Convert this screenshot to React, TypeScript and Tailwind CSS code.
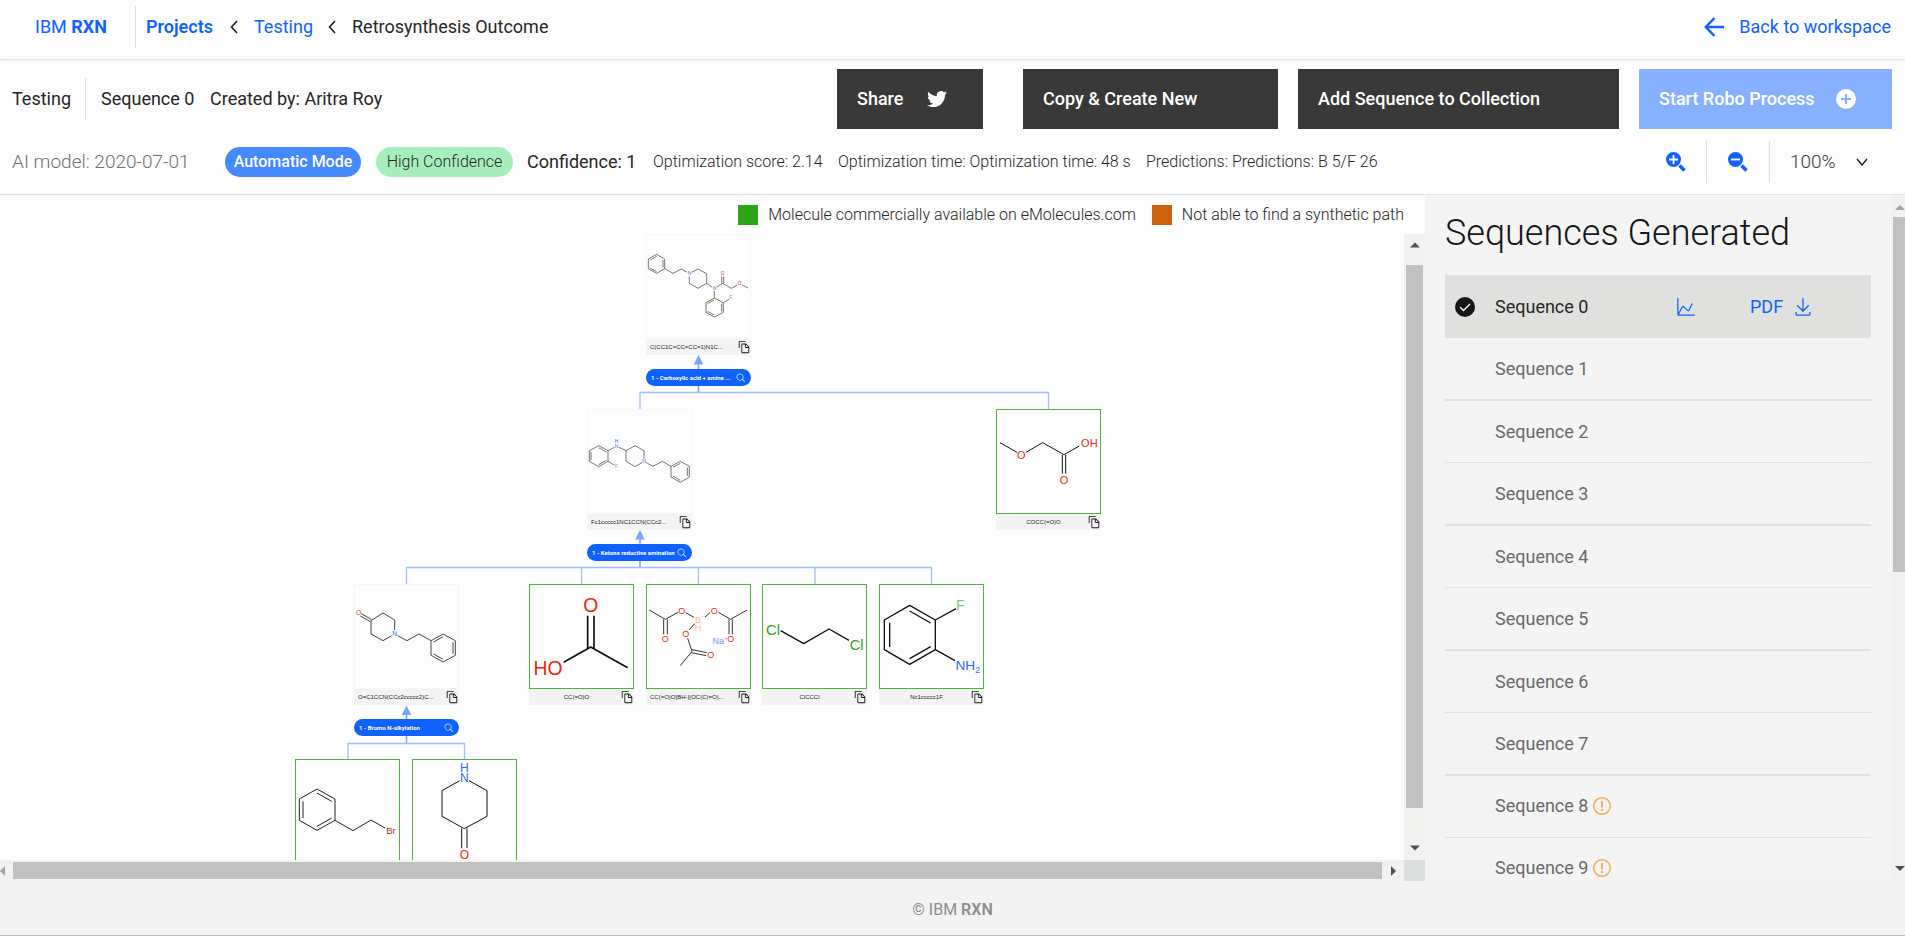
import { FaTwitter } from "react-icons/fa";

type Atom = { x: number; y: number; t: string; c: string; s: number };

type Molecule = {
  name: string;
  place: string;
  available: boolean;
  box: string;
  weight: number;
  tone: string;
  bonds: string;
  atoms: Atom[];
};

const RED = "#e8290b";
const BLUE = "#2f66f6";
const GREEN = "#2ca516";

const molecules: Molecule[] = [
  {
    name: "C(CC1C=CC=CC=1)N1C...",
    place: "left-[646px] top-0",
    available: false,
    box: "258 13 315 315",
    weight: 2,
    tone: "#333",
    bonds:
      "M265 88L290 74L314 88V117L290 131L265 117ZM271 91L290 80M309 91V114M290 126L271 115M314 117L339 131L364 118L381 128M395 128L414 118L440 132V161L414 176L388 161V140M440 161L456 172M470 172L488 161L514 176L532 166M546 166L564 175M485 161V140M491 161V140M463 184V205L490 219V248L463 262L438 248V219L463 205M462 211L443 222M485 222V245M463 256L443 245M490 219L507 209",
    atoms: [
      { x: 388, y: 132, t: "N", c: BLUE, s: 14 },
      { x: 463, y: 176, t: "N", c: BLUE, s: 14 },
      { x: 488, y: 132, t: "O", c: RED, s: 14 },
      { x: 539, y: 161, t: "O", c: RED, s: 14 },
      { x: 513, y: 204, t: "F", c: "#5fc44e", s: 14 },
    ],
  },
  {
    name: "Fc1ccccc1NC1CCN(CCc2...",
    place: "left-[587px] top-[175px]",
    available: false,
    box: "22 28 315 315",
    weight: 2,
    tone: "#333",
    bonds:
      "M29 153L57 138L85 153V185L57 201L29 185ZM34 156V182M57 144L80 157M57 195L80 182M85 153L104 143M118 143L139 153L166 138L193 153V177M187 189L166 201L139 185V153M200 189L220 200L248 185L274 200L302 185L329 200V232L302 248L274 232V200M280 203L302 191M323 203V229M302 242L280 229M85 185L104 196",
    atoms: [
      { x: 111, y: 125, t: "H", c: BLUE, s: 15 },
      { x: 111, y: 140, t: "N", c: BLUE, s: 15 },
      { x: 193, y: 186, t: "N", c: BLUE, s: 15 },
      { x: 110, y: 201, t: "F", c: "#5fc44e", s: 14 },
    ],
  },
  {
    name: "COCC(=O)O",
    place: "left-[996px] top-[175px]",
    available: true,
    box: "1248 28 315 315",
    weight: 3,
    tone: "#111",
    bonds:
      "M1260 129L1311 158M1338 158L1388 129L1452 165L1498 139M1447 166V222M1457 166V222",
    atoms: [
      { x: 1324, y: 166, t: "O", c: RED, s: 33 },
      { x: 1528, y: 130, t: "OH", c: RED, s: 33 },
      { x: 1452, y: 240, t: "O", c: RED, s: 33 },
    ],
  },
  {
    name: "O=C1CCN(CCc2ccccc2)C...",
    place: "left-[354px] top-[350px]",
    available: false,
    box: "223 73 315 315",
    weight: 3,
    tone: "#444",
    bonds:
      "M245 162L276 180M242 169L272 186M274 183L310 160L345 181V212M336 228L310 243L274 223V183M354 228L382 243L418 223L454 243L490 223L527 243V287L490 307L454 287V243M462 247L490 231M520 248V282M490 299L462 283",
    atoms: [
      { x: 237, y: 160, t: "O", c: "#d9480f", s: 20 },
      { x: 345, y: 223, t: "N", c: BLUE, s: 20 },
    ],
  },
  {
    name: "CC(=O)O",
    place: "left-[529px] top-[350px]",
    available: true,
    box: "747 73 315 315",
    weight: 5,
    tone: "#111",
    bonds: "M923 168V266M942 168V266M851 308L932 262L1043 324",
    atoms: [
      { x: 932, y: 137, t: "O", c: RED, s: 58 },
      { x: 804, y: 325, t: "HO", c: RED, s: 58 },
    ],
  },
  {
    name: "CC(=O)O[BH-](OC(C)=O)...",
    place: "left-[646px] top-[350px]",
    available: true,
    box: "78 73 315 315",
    weight: 3,
    tone: "#333",
    bonds:
      "M88 151L136 179L174 158M131 179V224M142 179V224M197 159L222 173M255 172L270 159M295 158L332 179L381 151M327 179V224M337 179V224M224 192L207 211M203 236L216 275L181 318M216 270L260 279M214 279L258 288",
    atoms: [
      { x: 136, y: 237, t: "O", c: RED, s: 27 },
      { x: 185, y: 152, t: "O", c: RED, s: 27 },
      { x: 283, y: 152, t: "O", c: RED, s: 27 },
      { x: 332, y: 237, t: "O", c: RED, s: 27 },
      { x: 197, y: 223, t: "O", c: RED, s: 27 },
      { x: 272, y: 286, t: "O", c: RED, s: 27 },
      { x: 234, y: 180, t: "B", c: "#ffb59e", s: 27 },
      { x: 234, y: 204, t: "H", c: "#ffb59e", s: 27 },
      { x: 249, y: 170, t: "−", c: "#ffb59e", s: 18 },
      { x: 295, y: 244, t: "Na", c: "#8093ff", s: 27 },
      { x: 317, y: 236, t: "+", c: "#8093ff", s: 16 },
    ],
  },
  {
    name: "ClCCCl",
    place: "left-[762px] top-[350px]",
    available: true,
    box: "427 73 315 315",
    weight: 4,
    tone: "#111",
    bonds: "M483 213L552 252L628 208L688 242",
    atoms: [
      { x: 460, y: 210, t: "Cl", c: GREEN, s: 44 },
      { x: 711, y: 254, t: "Cl", c: GREEN, s: 44 },
    ],
  },
  {
    name: "Nc1ccccc1F",
    place: "left-[879px] top-[350px]",
    available: true,
    box: "777 73 315 315",
    weight: 4,
    tone: "#111",
    bonds:
      "M793 181L869 137L946 181V270L869 314L793 270ZM809 189V262M869 154L932 190M869 297L932 261M946 181L1008 147M946 270L1005 303",
    atoms: [
      { x: 1021, y: 137, t: "F", c: "#7fcf78", s: 43 },
      { x: 1036, y: 315, t: "NH", c: BLUE, s: 41 },
      { x: 1073, y: 330, t: "2", c: BLUE, s: 26 },
    ],
  },
  {
    name: "BrCCc1ccccc1",
    place: "left-[295px] top-[525px]",
    available: true,
    box: "46 600 315 315",
    weight: 3,
    tone: "#222",
    bonds:
      "M59 720L112 690L166 720V784L112 814L59 784ZM70 727V777M112 702L156 727M112 802L156 777M166 784L220 815L274 783L316 807",
    atoms: [{ x: 334, y: 814, t: "Br", c: "#a5371f", s: 29 }],
  },
  {
    name: "O=C1CCNCC1",
    place: "left-[412px] top-[525px]",
    available: true,
    box: "397 600 315 315",
    weight: 3,
    tone: "#111",
    bonds:
      "M540 665L487 695V772L554 809L622 772V695L568 665M546 808V867M562 808V867",
    atoms: [
      { x: 554, y: 626, t: "H", c: BLUE, s: 36 },
      { x: 554, y: 657, t: "N", c: BLUE, s: 36 },
      { x: 554, y: 887, t: "O", c: RED, s: 36 },
    ],
  },
];

const reactions = [
  { label: "1 - Carboxylic acid + amine ...", place: "left-[646px] top-[135px]" },
  { label: "1 - Ketone reductive amination", place: "left-[587px] top-[310px]" },
  { label: "1 - Bromo N-alkylation", place: "left-[354px] top-[485px]" },
];

const sequences = Array.from({ length: 10 }, (_, i) => ({
  name: `Sequence ${i}`,
  warning: i > 7,
}));

function Icon({ d, className }: { d: string; className: string }) {
  return (
    <svg viewBox="0 0 32 32" fill="currentColor" className={className} aria-hidden="true">
      <path d={d} />
    </svg>
  );
}

const SEARCH =
  "M29 27.586l-7.552-7.552a11.018 11.018 0 1 0-1.414 1.414L27.586 29ZM4 13a9 9 0 1 1 9 9 9.01 9.01 0 0 1-9-9Z";
const DOWNLOAD =
  "M26 24v4H6v-4H4v4a2 2 0 0 0 2 2h20a2 2 0 0 0 2-2v-4zM26 14l-1.41-1.41L17 20.17V2h-2v18.17l-7.59-7.58L6 14l10 10 10-10z";
const CHART =
  "M4.67 28l6.39-12 7.3 6.49a2 2 0 0 0 1.7.47 2 2 0 0 0 1.42-1.07L27 10.9l-1.82-.9-5.49 11-7.3-6.49a2 2 0 0 0-1.68-.51 2 2 0 0 0-1.42 1L4 25V2H2v26a2 2 0 0 0 2 2h26v-2z";
const COPY =
  "M27.4 14.7l-6.1-6.1C21 8.2 20.5 8 20 8h-8c-1.1 0-2 .9-2 2v18c0 1.1.9 2 2 2h14c1.1 0 2-.9 2-2V16.1c0-.5-.2-1-.6-1.4zM20 10l5.9 6H20v-6zm-8 18V10h6v6c0 1.1.9 2 2 2h6v10H12zM6 18H4V4c0-1.1.9-2 2-2h14v2H6v14z";

function ChevronLeft() {
  return (
    <svg viewBox="0 0 8 14" className="h-[14px] w-2" fill="none" stroke="#161616" strokeWidth="1.5" aria-hidden="true">
      <path d="M7 1L1.5 7L7 13" />
    </svg>
  );
}

function Divider() {
  return <span className="h-[42px] w-px shrink-0 bg-[#dcdcdc]" />;
}

function ZoomIcon({ plus }: { plus?: boolean }) {
  return (
    <svg viewBox="0 0 20 20" className="size-5" aria-hidden="true">
      <circle cx="7.5" cy="7.5" r="7.5" fill="#0f62fe" />
      <path d="M13.500 13.500L18.500 18.500" stroke="#0f62fe" strokeWidth="3.6" />
      <path d={plus ? "M3 7.5H12M7.5 3V12" : "M3 7.5H12"} stroke="#fff" strokeWidth="1.8" />
    </svg>
  );
}

function MoleculeCard({ m }: { m: Molecule }) {
  const long = m.name.length > 14;
  return (
    <figure className={`absolute w-[105px] ${m.place}`}>
      <div
        className={
          m.available
            ? "size-[105px] border border-[#4db53c] bg-[#fdfdfd]"
            : "size-[105px] border border-[#f6f6f6] bg-[#fdfdfd]"
        }
      >
        <svg
          viewBox={m.box}
          className="-m-px size-[105px] font-['Liberation_Sans',sans-serif] font-normal"
          role="img"
          aria-label={m.name}
        >
          <path d={m.bonds} fill="none" stroke={m.tone} strokeWidth={m.weight} strokeLinejoin="round" />
          {m.atoms.map((a) => (
            <text
              key={`${a.x}-${a.y}`}
              x={a.x}
              y={a.y}
              dy="0.36em"
              textAnchor="middle"
              fill={a.c}
              fontSize={a.s}
            >
              {a.t}
            </text>
          ))}
        </svg>
      </div>
      <figcaption className="flex h-4 items-center bg-[#f3f3f3] pl-1 font-['Liberation_Sans',sans-serif] text-[6px] leading-4 font-normal text-[#222]">
        <span className={long ? "whitespace-nowrap" : "w-24 text-center"}>{m.name}</span>
        <button type="button" aria-label="Copy SMILES" className="ml-auto shrink-0">
          <Icon d={COPY} className="size-[14px] text-[#161616]" />
        </button>
      </figcaption>
    </figure>
  );
}

function ReactionPill({ label, place }: { label: string; place: string }) {
  return (
    <button
      type="button"
      className={`absolute flex h-[17px] w-[105px] items-center rounded-full bg-[#0f62fe] pr-[5px] pl-[5px] text-[6px] leading-[17px] font-bold text-white ${place}`}
    >
      <span className="whitespace-nowrap">{label}</span>
      <Icon d={SEARCH} className="ml-auto size-[10px] shrink-0" />
    </button>
  );
}

function Connectors() {
  return (
    <svg className="absolute top-0 left-0 h-[626px] w-[1100px]" viewBox="0 0 1100 626" aria-hidden="true">
      <g fill="none" stroke="#9dc0fd" strokeWidth="1.3">
        <path d="M640 176V158.5H1048.5V176" />
        <path d="M406.5 350V333.5H931.5V350M581.5 333.5V350M698.5 333.5V350M815 333.5V350" />
        <path d="M348 526V509.5H464.5V526" />
      </g>
      <g fill="none" stroke="#78a5fa" strokeWidth="1.5">
        <path d="M698.5 125V158M640 300V333M406.5 476V509" />
      </g>
      <path
        d="M698.5 121l4.8 9.5h-9.6zM640 296l4.8 9.5h-9.6zM406.5 471.500l4.800 9.500h-9.600z"
        fill="#78a5fa"
      />
    </svg>
  );
}

function Arrow({ d, className }: { d: string; className: string }) {
  return (
    <svg viewBox="0 0 10 10" className={`size-[10px] ${className}`} fill="currentColor" aria-hidden="true">
      <path d={d} />
    </svg>
  );
}

export default function App() {
  return (
    <div className="flex h-screen flex-col overflow-hidden border-b border-[#c1c1c1] bg-[#fdfdfd] font-[Roboto,'Open_Sans',sans-serif] text-[18px] leading-6 font-normal text-[#262626]">
      <header className="flex h-[60px] shrink-0 items-center border-b border-[#e6e6e6] pr-3.5 pb-[5px] pl-[35px] shadow-xs">
        <a href="#home" className="w-[100px] text-[#0f62fe]">
          IBM <b className="font-bold">RXN</b>
        </a>
        <Divider />
        <nav aria-label="Breadcrumb" className="flex items-center pl-2.5">
          <a href="#projects" className="w-[84px] font-semibold text-[#0f62fe]">
            Projects
          </a>
          <ChevronLeft />
          <a href="#testing" className="ml-4 w-[74px] text-[#0f62fe]">
            Testing
          </a>
          <ChevronLeft />
          <span className="ml-4">Retrosynthesis Outcome</span>
        </nav>
        <a href="#workspace" className="ml-auto flex items-center gap-[15px] text-[#0f62fe]">
          <svg viewBox="0 0 20 20" className="size-5" fill="none" stroke="currentColor" strokeWidth="2.5" aria-hidden="true">
            <path d="M10.500 1L1.800 10L10.500 19M2 10H20" />
          </svg>
          Back to workspace
        </a>
      </header>

      <section className="shrink-0 border-b border-[#e6e6e6] shadow-xs">
        <div className="flex h-[69px] items-end pr-[13px] pl-3">
          <div className="flex h-[60px] items-center">
            <span className="w-[73px]">Testing</span>
            <Divider />
            <span className="ml-[15px] w-[109px]">Sequence 0</span>
            <span>Created by: Aritra Roy</span>
          </div>
          <div className="ml-auto flex gap-5 font-medium text-white">
            <button type="button" className="mr-5 flex h-[60px] w-[146px] items-center justify-between bg-[#393939] pr-9 pl-5">
              Share
              <FaTwitter className="size-5" aria-hidden="true" />
            </button>
            <button type="button" className="h-[60px] w-[255px] bg-[#393939] pl-5 text-left">
              Copy &amp; Create New
            </button>
            <button type="button" className="h-[60px] w-[321px] bg-[#393939] pl-5 text-left">
              Add Sequence to Collection
            </button>
            <button type="button" className="flex h-[60px] w-[253px] items-center justify-between bg-[#87b1ff] pr-9 pl-5">
              Start Robo Process
              <svg viewBox="0 0 20 20" className="size-5" aria-hidden="true">
                <circle cx="10" cy="10" r="10" fill="#fff" />
                <path d="M5 10H15M10 5V15" stroke="#87b1ff" strokeWidth="2.200" />
              </svg>
            </button>
          </div>
        </div>

        <div className="flex h-[65px] items-center pr-[13px] pl-3 text-[16px] font-light">
          <span className="w-[213px] text-[19px] text-[#6f6f6f]">AI model: 2020-07-01</span>
          <span className="flex h-[30px] w-[136px] items-center justify-center rounded-full bg-[#4589ff] font-medium text-white">
            Automatic Mode
          </span>
          <span className="ml-[15px] flex h-[30px] w-[137px] items-center justify-center rounded-full bg-[#a7efba]">
            High Confidence
          </span>
          <span className="ml-3.5 w-[126px] text-[18px] font-normal">Confidence: 1</span>
          <span className="w-[185px]">Optimization score: 2.14</span>
          <span className="w-[308px]">Optimization time: Optimization time: 48 s</span>
          <span>Predictions: Predictions: B 5/F 26</span>
          <div className="ml-auto flex items-center">
            <button type="button" aria-label="Zoom in" className="mr-5">
              <ZoomIcon plus />
            </button>
            <Divider />
            <button type="button" aria-label="Zoom out" className="mx-[21px]">
              <ZoomIcon />
            </button>
            <Divider />
            <div className="relative ml-5 flex items-center pr-3">
              <select
                aria-label="Zoom level"
                defaultValue="100%"
                className="w-[90px] appearance-none bg-transparent text-[19px] font-light text-[#393939]"
              >
                <option>100%</option>
                <option>75%</option>
                <option>50%</option>
              </select>
              <svg
                viewBox="0 0 12 8"
                className="pointer-events-none absolute right-6 h-2 w-3"
                fill="none"
                stroke="#161616"
                strokeWidth="1.300"
                aria-hidden="true"
              >
                <path d="M1 1L6 7L11 1" />
              </svg>
            </div>
          </div>
        </div>
      </section>

      <main className="flex min-h-0 flex-1">
        <section className="flex min-w-0 flex-1 flex-col">
          <div className="flex h-[39px] shrink-0 items-center justify-end pr-[21px] text-[16px] font-light">
            <span className="mr-2.5 size-5 bg-[#2ca516]" />
            <span className="mr-4">Molecule commercially available on eMolecules.com</span>
            <span className="mr-2.5 size-5 bg-[#cc610f]" />
            <span>Not able to find a synthetic path</span>
          </div>
          <div className="flex min-h-0 flex-1">
            <div className="relative min-w-0 flex-1 overflow-hidden">
              <Connectors />
              {molecules.map((m) => (
                <MoleculeCard key={m.name} m={m} />
              ))}
              {reactions.map((r) => (
                <ReactionPill key={r.label} label={r.label} place={r.place} />
              ))}
            </div>
            <div className="flex w-[21px] shrink-0 flex-col items-center bg-[#f1f1ef] pt-[6px] pb-[7px] text-[#505050]">
              <Arrow d="M0 7.500H10L5 2.500Z" className="mb-[15px]" />
              <span className="w-[17px] flex-1 bg-[#c1c1c1]" />
              <Arrow d="M0 2.500H10L5 7.500Z" className="mt-[35px]" />
            </div>
          </div>
          <div className="flex h-[21px] shrink-0 items-center bg-[#f1f1ef] text-[#505050]">
            <Arrow d="M5 0V10L0 5Z" className="mr-[3px] text-[#a3a3a3]" />
            <span className="h-[17px] flex-1 bg-[#c1c1c1]" />
            <Arrow d="M2 0V10L7 5Z" className="mr-[5px] ml-[7px]" />
            <span className="size-[21px] bg-[#dcdedd]" />
          </div>
        </section>

        <aside className="flex w-[480px] shrink-0 bg-[#f4f4f4]">
          <div className="flex-1 overflow-hidden pr-5 pl-5">
            <h2 className="pt-[14px] pb-[18px] text-[36px] leading-[48px] font-light text-[#161616]">
              Sequences Generated
            </h2>
            <div className="flex h-[63px] items-center bg-[#e0e0de] pl-2.5">
              <svg viewBox="0 0 20 20" className="size-5" aria-hidden="true">
                <circle cx="10" cy="10" r="10" fill="#161616" />
                <path d="M5.200 10.200L8.500 13.500L15 7" fill="none" stroke="#fff" strokeWidth="1.400" />
              </svg>
              <span className="ml-5 w-[181px]">Sequence 0</span>
              <button type="button" aria-label="Show chart" className="text-[#0f62fe]">
                <Icon d={CHART} className="size-5" />
              </button>
              <a href="#pdf" className="ml-[54px] flex items-center gap-2.5 text-[#0f62fe]">
                PDF
                <Icon d={DOWNLOAD} className="size-5" />
              </a>
            </div>
            <ul className="text-[#6a6a6a]">
              {sequences.slice(1).map((s) => (
                <li key={s.name} className="border-[#e0e0e0] odd:border-b-2 even:border-b">
                  <button
                    type="button"
                    className={
                      s.warning
                        ? "flex h-[61px] w-full items-center gap-1 pb-0.5 pl-[50px] text-left"
                        : "flex h-[61px] w-full items-center pl-[50px] text-left"
                    }
                  >
                    {s.name}
                    {s.warning && (
                      <svg viewBox="0 0 20 20" className="size-5" aria-hidden="true">
                        <circle cx="10" cy="10" r="8.300" fill="none" stroke="#f1af55" strokeWidth="1.500" />
                        <path d="M10 5V11.500M10 13V15" stroke="#f1af55" strokeWidth="1.800" />
                      </svg>
                    )}
                  </button>
                </li>
              ))}
            </ul>
          </div>
          <div className="flex w-[14px] flex-col items-end overflow-hidden bg-[#f1f1ef] pt-[7px] pb-[7px] text-[#505050]">
            <Arrow d="M0 8H10L5 3Z" className="mb-[5px] text-[#a3a3a3]" />
            <span className="h-[355px] w-3 bg-[#c1c1c1]" />
            <Arrow d="M0 2H10L5 7Z" className="mt-auto" />
          </div>
        </aside>
      </main>

      <footer className="flex h-[54px] shrink-0 items-center justify-center bg-[#f3f3f3] pt-1 text-[16px] text-[#8d8d8d]">
        <p>
          © IBM <b className="font-semibold">RXN</b>
        </p>
      </footer>
    </div>
  );
}
